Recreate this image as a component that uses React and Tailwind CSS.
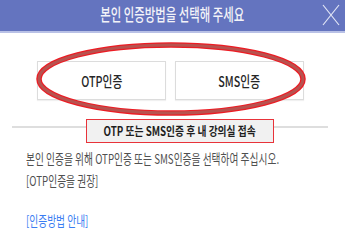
export default function App() {
  return (
    <div className="w-[345px] h-[240px] bg-white overflow-hidden relative font-['Noto_Sans_CJK_KR','Noto_Sans',sans-serif]">
      {/* header */}
      <div className="h-[33px] bg-[#6474bf] border-b-[2px] border-[#b9c1e6] flex items-center justify-center relative pb-[3px]">
        <span className="inline-block whitespace-nowrap text-[16.5px] font-medium leading-none text-[#f3f3f8] scale-x-[0.69]">
          본인 인증방법을 선택해 주세요
        </span>
        <svg className="absolute right-[5px] top-[4px]" width="18" height="22" viewBox="0 0 18 22">
          <path d="M1 1L17 21M17 1L1 21" stroke="#e2e6f6" strokeWidth="1.2" fill="none" />
        </svg>
      </div>

      {/* buttons */}
      <div className="relative mt-[28px] pl-[37px] flex gap-[9px]">
        <div className="w-[129px] h-[39px] border border-[#dcdcdc] bg-white shadow-[0_1px_1px_rgba(0,0,0,0.06)] flex items-center justify-center">
          <span className="inline-block whitespace-nowrap text-[14.5px] font-medium text-[#262626] scale-x-[0.74]">OTP인증</span>
        </div>
        <div className="w-[129px] h-[39px] border border-[#dcdcdc] bg-white shadow-[0_1px_1px_rgba(0,0,0,0.06)] flex items-center justify-center">
          <span className="inline-block whitespace-nowrap text-[14.5px] font-medium text-[#262626] scale-x-[0.74]">SMS인증</span>
        </div>
      </div>

      {/* divider + label */}
      <div className="relative mt-[19px] h-[24px] flex justify-center">
        <div className="absolute left-[12px] right-[17px] top-[7px] h-[2px] bg-[#dedede]" />
        <div className="relative ml-[14px] w-[188px] h-[24px] border-[1.5px] border-[#e8333a] bg-[#f1f1f1] flex items-center justify-center">
          <span className="inline-block whitespace-nowrap text-[12.5px] font-bold text-[#1e1e1e] scale-x-[0.78]">
            OTP 또는 SMS인증 후 내 강의실 접속
          </span>
        </div>
      </div>

      {/* body text */}
      <div className="mt-[4px] pl-[26px] text-[13.5px] leading-[22px] text-[#505050]">
        <div className="whitespace-nowrap origin-left scale-x-[0.72]">
          본인 인증을 위해 OTP인증 또는 SMS인증을 선택하여 주십시오.
        </div>
        <div className="whitespace-nowrap origin-left scale-x-[0.72]">[OTP인증을 권장]</div>
        <div className="mt-[18px] whitespace-nowrap origin-left scale-x-[0.72] text-[#3a7df2]">[인증방법 안내]</div>
      </div>

      {/* red ellipse annotation */}
      <svg className="absolute left-0 top-0 pointer-events-none" width="345" height="240">
        <ellipse cx="171" cy="79" rx="132" ry="34" fill="none" stroke="#ec1c24" strokeWidth="5.5" />
        <ellipse cx="171" cy="79" rx="132" ry="34" fill="none" stroke="#b8524f" strokeWidth="3" />
      </svg>
    </div>
  );
}
